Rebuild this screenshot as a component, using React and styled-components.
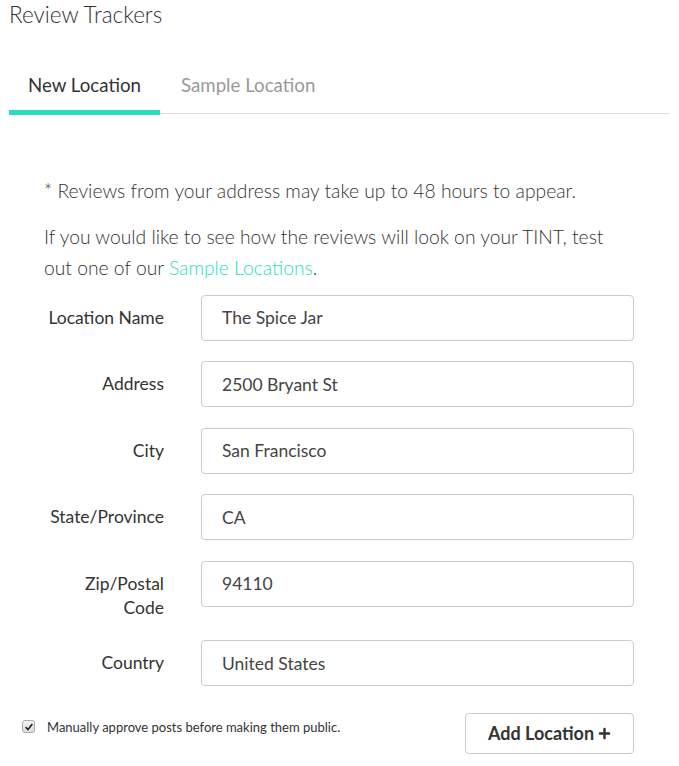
import React from "react"
import styled, { createGlobalStyle } from "styled-components"
import { FaPlus } from "react-icons/fa"

const GlobalStyle = createGlobalStyle`
  body {
    margin: 0;
    background: #fff;
    font-family: Lato, "Open Sans", sans-serif;
    color: #333;
  }
`

const fields = [
  { id: "name", label: "Location Name", value: "The Spice Jar" },
  { id: "address", label: "Address", value: "2500 Bryant St" },
  { id: "city", label: "City", value: "San Francisco" },
  { id: "state", label: "State/Province", value: "CA" },
  { id: "zip", label: "Zip/Postal Code", value: "94110" },
  { id: "country", label: "Country", value: "United States" },
]

const App = () => (
  <Page>
    <GlobalStyle />
    <Title>Review Trackers</Title>
    <Tabs>
      <Tab active>New Location</Tab>
      <Tab>Sample Location</Tab>
    </Tabs>
    <Body>
      <Note>* Reviews from your address may take up to 48 hours to appear.</Note>
      <Note>
        If you would like to see how the reviews will look on your TINT, test
        out one of our <a href="#sample">Sample Locations</a>.
      </Note>
      <Form>
        {fields.map(f => (
          <Row key={f.id}>
            <Label htmlFor={f.id}>{f.label}</Label>
            <Input id={f.id} defaultValue={f.value} />
          </Row>
        ))}
      </Form>
    </Body>
    <Footer>
      <Check>
        <Box>
          <svg viewBox="0 0 12 12" width="10" height="10">
            <path d="M2 6.2 L4.8 9 L10 2.5" fill="none" stroke="#222" strokeWidth="2" />
          </svg>
        </Box>
        Manually approve posts before making them public.
      </Check>
      <Button>
        Add Location <FaPlus />
      </Button>
    </Footer>
  </Page>
)

const Page = styled.div`
  width: 679px;
  padding: 0 10px 0 9px;
  box-sizing: border-box;
`

const Title = styled.h1`
  margin: 0;
  font-size: 22.5px;
  font-weight: 300;
  line-height: 30px;
  color: #333;
`

const Tabs = styled.div`
  display: flex;
  margin-top: 43px;
  border-bottom: 1px solid #ddd;
`

const Tab = styled.div`
  padding: 0 19px 13px;
  margin-right: 2px;
  margin-bottom: -2px;
  font-size: 18.7px;
  line-height: 24px;
  color: ${p => (p.active ? "#333" : "#999")};
  border-bottom: 5px solid ${p => (p.active ? "#2bdcbf" : "transparent")};
`

const Body = styled.div`
  padding: 61px 35px 0;
`

const Note = styled.p`
  margin: 0 0 15px;
  font-size: 19.3px;
  font-weight: 300;
  line-height: 31px;
  color: #333;
  a {
    color: #2bdcbf;
    text-decoration: none;
  }
`

const Form = styled.div`
  margin-top: -3.5px;
`

const Row = styled.div`
  display: flex;
  align-items: flex-start;
  gap: 37px;
  margin-bottom: 20.5px;
`

const Label = styled.label`
  width: 120px;
  flex-shrink: 0;
  padding-top: 11px;
  text-align: right;
  font-size: 17.5px;
  line-height: 24px;
  color: #333;
`

const Input = styled.input`
  flex: 1;
  height: 46px;
  box-sizing: border-box;
  padding: 0 20px;
  border: 1px solid #ccc;
  border-radius: 4px;
  font-family: Lato, sans-serif;
  font-size: 17.5px;
  color: #444;
  outline: none;
`

const Footer = styled.div`
  display: flex;
  justify-content: space-between;
  align-items: flex-start;
  padding: 6px 35px 0 13px;
`

const Check = styled.label`
  display: flex;
  align-items: center;
  gap: 12px;
  font-size: 13px;
  line-height: 16px;
  color: #333;
  margin-top: 6px;
`

const Box = styled.span`
  width: 13px;
  height: 13px;
  box-sizing: border-box;
  border: 1px solid #aaa;
  border-radius: 3px;
  background: linear-gradient(#f4f4f4, #dcdcdc);
  display: flex;
  align-items: center;
  justify-content: center;
`

const Button = styled.button`
  width: 169px;
  height: 41px;
  background: #fff;
  border: 1px solid #ccc;
  border-radius: 4px;
  font-family: Lato, sans-serif;
  font-size: 18px;
  font-weight: 700;
  color: #333;
  display: flex;
  align-items: center;
  justify-content: center;
  gap: 4px;
  svg {
    font-size: 13px;
  }
`

export default App
